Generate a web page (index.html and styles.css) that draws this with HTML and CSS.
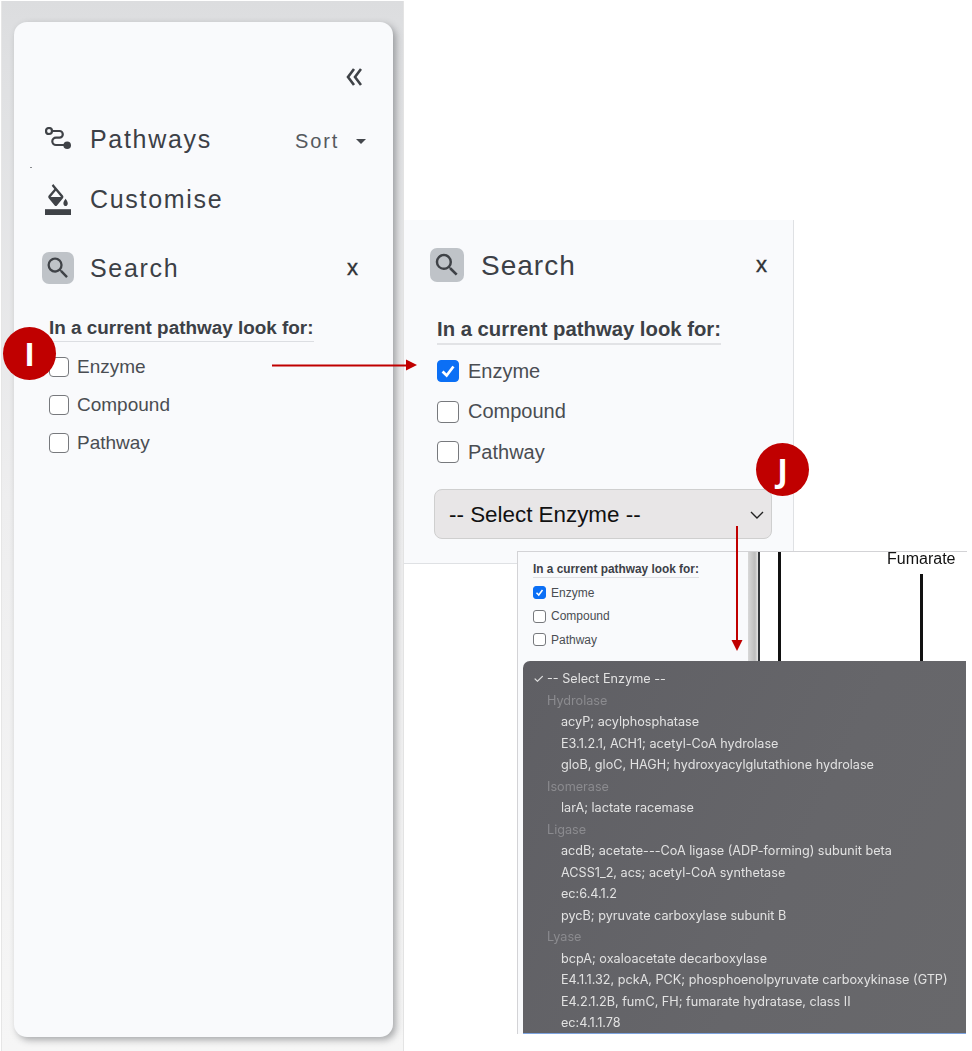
FILE: index.html
```html
<!DOCTYPE html>
<html lang="en">
<head>
<meta charset="utf-8">
<title>Search panel walkthrough</title>
<link rel="stylesheet" href="styles.css">
</head>
<body>
<main class="canvas">
  <section class="backdrop">
    <div class="card">
      <div class="collapse-row">
        <svg class="collapse-icon" viewBox="0 0 16 18"><path d="M8 1 L2 9 L8 17 M15 1 L9 9 L15 17"/></svg>
      </div>
      <div class="nav-row nav-row-pathways">
        <svg class="nav-icon" viewBox="0 0 26 24"><circle cx="4" cy="4" r="3" class="hollow"/><path class="hollow" d="M7 4H14.5a3.3 3.3 0 0 1 0 6.6H11a3.7 3.7 0 0 0 0 7.4H19"/><circle cx="22.2" cy="18.2" r="3.8" class="solid"/></svg>
        <span class="nav-label">Pathways</span>
        <span class="sort">Sort<i class="caret"></i></span>
      </div>
      <i class="speck"></i>
      <div class="nav-row nav-row-customise">
        <svg class="nav-icon nav-icon-fill" viewBox="0 0 24 24" preserveAspectRatio="none"><path class="solid" d="M16.56 8.94L7.62 0 6.21 1.41l2.38 2.38-5.15 5.15c-.59.59-.59 1.54 0 2.12l5.5 5.5c.29.29.68.44 1.06.44s.77-.15 1.06-.44l5.5-5.5c.59-.58.59-1.53 0-2.12zM5.21 10L10 5.21 14.79 10H5.21zM19 11.5s-2 2.17-2 3.5c0 1.1.9 2 2 2s2-.9 2-2c0-1.33-2-3.5-2-3.5z"/><path class="solid" d="M0 19.5h24V24H0z"/></svg>
        <span class="nav-label">Customise</span>
      </div>
      <div class="search-head">
        <span class="search-tile"><svg viewBox="0 0 24 24"><path class="solid" d="M15.5 14h-.79l-.28-.27A6.47 6.47 0 0 0 16 9.5 6.5 6.5 0 1 0 9.5 16c1.61 0 3.09-.59 4.23-1.57l.27.28v.79l5 4.99L20.49 19l-4.99-5zm-6 0C7.01 14 5 11.99 5 9.5S7.01 5 9.5 5 14 7.01 14 9.5 11.99 14 9.5 14z"/></svg></span>
        <span class="nav-label">Search</span>
        <span class="close">x</span>
      </div>
      <div class="finder">
        <h2 class="finder-title">In a current pathway look for:</h2>
        <label class="check"><i class="box"></i>Enzyme</label>
        <label class="check"><i class="box"></i>Compound</label>
        <label class="check"><i class="box"></i>Pathway</label>
      </div>
    </div>
  </section>

  <section class="zoom-panel">
    <div class="search-head">
      <span class="search-tile"><svg viewBox="0 0 24 24"><path class="solid" d="M15.5 14h-.79l-.28-.27A6.47 6.47 0 0 0 16 9.5 6.5 6.5 0 1 0 9.5 16c1.61 0 3.09-.59 4.23-1.57l.27.28v.79l5 4.99L20.49 19l-4.99-5zm-6 0C7.01 14 5 11.99 5 9.5S7.01 5 9.5 5 14 7.01 14 9.5 11.99 14 9.5 14z"/></svg></span>
      <span class="nav-label">Search</span>
      <span class="close">x</span>
    </div>
    <div class="finder">
      <h2 class="finder-title">In a current pathway look for:</h2>
      <label class="check"><i class="box box-on"><svg viewBox="0 0 22 22"><path d="M5 11.5 L9.5 16 L17 6"/></svg></i>Enzyme</label>
      <label class="check"><i class="box"></i>Compound</label>
      <label class="check"><i class="box"></i>Pathway</label>
    </div>
    <div class="select">
      <span>-- Select Enzyme --</span>
      <svg viewBox="0 0 14 8"><path d="M1 1 L7 7 L13 1"/></svg>
    </div>
  </section>

  <section class="shot">
    <div class="shot-side">
      <div class="finder">
        <h2 class="finder-title">In a current pathway look for:</h2>
        <label class="check"><i class="box box-on"><svg viewBox="0 0 22 22"><path d="M5 11.5 L9.5 16 L17 6"/></svg></i>Enzyme</label>
        <label class="check"><i class="box"></i>Compound</label>
        <label class="check"><i class="box"></i>Pathway</label>
      </div>
    </div>
    <div class="shot-map">
      <i class="map-edge"></i>
      <i class="map-line map-line-thin"></i>
      <i class="map-line map-line-thick"></i>
      <span class="map-fumarate">Fumarate</span>
      <i class="map-line map-line-fumarate"></i>
    </div>
  </section>

  <ul class="menu">
    <li class="opt opt-top"><span class="tick">✓</span>-- Select Enzyme --</li>
    <li class="group">Hydrolase</li>
    <li class="opt">acyP; acylphosphatase</li>
    <li class="opt">E3.1.2.1, ACH1; acetyl-CoA hydrolase</li>
    <li class="opt">gloB, gloC, HAGH; hydroxyacylglutathione hydrolase</li>
    <li class="group">Isomerase</li>
    <li class="opt">larA; lactate racemase</li>
    <li class="group">Ligase</li>
    <li class="opt">acdB; acetate---CoA ligase (ADP-forming) subunit beta</li>
    <li class="opt">ACSS1_2, acs; acetyl-CoA synthetase</li>
    <li class="opt">ec:6.4.1.2</li>
    <li class="opt">pycB; pyruvate carboxylase subunit B</li>
    <li class="group">Lyase</li>
    <li class="opt">bcpA; oxaloacetate decarboxylase</li>
    <li class="opt">E4.1.1.32, pckA, PCK; phosphoenolpyruvate carboxykinase (GTP)</li>
    <li class="opt">E4.2.1.2B, fumC, FH; fumarate hydratase, class II</li>
    <li class="opt">ec:4.1.1.78</li>
  </ul>

  <svg class="arrow arrow-right" viewBox="0 0 146 12"><path d="M0 6.5 H136" class="arrow-shaft"/><path d="M134 0.5 L145 6 L134 11.5 Z" class="arrow-head"/></svg>
  <svg class="arrow arrow-down" viewBox="0 0 12 126"><path d="M6 0 V116" class="arrow-shaft"/><path d="M0.5 114 L6 125 L11.5 114 Z" class="arrow-head"/></svg>
  <span class="badge badge-i">I</span>
  <span class="badge badge-j">J</span>
</main>
</body>
</html>
```
FILE: styles.css
```css
* { box-sizing: border-box; }
html, body { margin: 0; padding: 0; background: #fff; }
body { font-family: "Liberation Sans", Arial, sans-serif; color: #3c4046; }
.canvas { position: relative; width: 972px; height: 1051px; overflow: hidden; background: #fff; }

.hollow { fill: none; stroke: #3f4247; stroke-width: 2.2; }
.solid { fill: #3f4247; }

/* Left: application sidebar */
.backdrop {
  position: absolute; left: 1px; top: 1px; width: 403px; height: 1050px;
  padding: 21px 10px 14px 12px;
  background: linear-gradient(#dcdddf 0, #dfe0e2 60px, #eeeeef 500px, #f6f6f6 1050px);
  border-right: 1px solid #e4e4e4;
  border-left: 1px solid #e6e6e6;
}
.card {
  position: relative;
  height: 1015px; padding: 0 26px 0 28px;
  background: #f9fafc; border-radius: 13px;
  box-shadow: 3px 3px 7px rgba(60, 62, 66, .42);
  display: flex; flex-direction: column;
}
.speck { position: absolute; left: 16px; top: 145px; width: 2px; height: 1px; background: #8a8c90; }
.collapse-row { display: flex; justify-content: flex-end; padding-top: 46px; height: 104px; padding-right: 5px; }
.collapse-icon { width: 16px; height: 18px; fill: none; stroke: #3f4247; stroke-width: 2.6; }
.nav-row { display: flex; align-items: center; }
.nav-row-pathways { height: 26px; margin-left: 3px; }
.nav-row-customise { margin-top: 31px; height: 32px; margin-left: 3px; }
.nav-icon { width: 26px; height: 24px; flex: none; }
.nav-icon-fill { height: 31px; }
.nav-label { font-size: 25px; letter-spacing: 1.7px; color: #3c4046; margin-left: 19px; line-height: 28px; }
.sort { margin-left: auto; margin-top: 5px; font-size: 20px; letter-spacing: 1.8px; color: #55595e; display: flex; align-items: center; }
.caret { width: 0; height: 0; margin-left: 17px; margin-right: 1px; border: 5px solid transparent; border-top: 5px solid #44474c; border-bottom: 0; }
.search-head { display: flex; align-items: center; margin-top: 37px; height: 32px; }
.search-tile { width: 32px; height: 32px; flex: none; background: #bfc3c8; border-radius: 7px; display: flex; align-items: center; justify-content: center; }
.search-tile svg { width: 28px; height: 28px; }
.search-head .nav-label { margin-left: 16px; }
.close { margin-left: auto; margin-right: 9px; font-size: 22px; font-weight: 500; color: #2f3236; -webkit-text-stroke: .4px #2f3236; }
.finder { display: flex; flex-direction: column; align-items: flex-start; margin: 33px 0 0 7px; }
.finder-title { margin: 0 0 6px; padding-bottom: 2px; font-size: 18.9px; line-height: 22px; font-weight: 700; color: #3c4046; border-bottom: 1px solid #dcdee2; white-space: nowrap; }
.check { display: flex; align-items: center; height: 38px; font-size: 19px; color: #4a4d52; }
.box { width: 20px; height: 20px; margin-right: 8px; flex: none; background: #fff; border: 1.5px solid #77797d; border-radius: 4px; }

/* Middle: enlarged search panel */
.zoom-panel {
  position: absolute; left: 404px; top: 220px; width: 390px; height: 344px;
  padding: 28px 0 0 26px;
  background: #f9fafc;
  border-right: 1px solid #dfe1e4; border-bottom: 1px solid #dfe1e4;
}
.zoom-panel .search-head { margin-top: 0; height: 34px; width: 344px; }
.zoom-panel .search-tile { width: 34px; height: 34px; }
.zoom-panel .search-tile svg { width: 30px; height: 30px; }
.zoom-panel .nav-label { font-size: 28px; margin-left: 17px; margin-top: 1px; letter-spacing: 1px; }
.zoom-panel .close { margin-right: 7px; }
.zoom-panel .finder { margin: 35px 0 0 7px; }
.zoom-panel .finder-title { font-size: 20.3px; line-height: 24px; margin-bottom: 6px; border-bottom: 2px solid #e2e3e6; }
.zoom-panel .check { height: 40.5px; font-size: 20px; }
.zoom-panel .box { width: 22px; height: 22px; margin-right: 9px; }
.box-on { background: #0b6ff5; border-color: #0b6ff5; display: flex; padding: 0; }
.box-on svg { width: 100%; height: 100%; fill: none; stroke: #fff; stroke-width: 3; }
.select {
  display: flex; align-items: center; justify-content: space-between;
  width: 338px; height: 50px; margin: 16px 0 0 4px; padding: 2px 7px 0 14px;
  background: #e8e6e7; border: 1px solid #cfcfcf; border-radius: 8px;
  font-size: 22.4px; color: #111;
}
.select svg { width: 14px; height: 8px; fill: none; stroke: #222; stroke-width: 1.4; }

/* Lower right: application screenshot */
.shot {
  position: absolute; left: 517px; top: 551px; width: 450px; height: 483px;
  display: flex; background: #fff;
  border: 1px solid #d3d3d6; border-bottom: 0; border-right-width: 0;
  filter: blur(.3px);
}
.shot-side { width: 231px; background: #f9fafc; padding: 0 0 0 15px; }
.shot .finder { margin: 10px 0 0 0; }
.shot .finder-title { font-size: 11.85px; line-height: 14px; margin-bottom: 3px; padding-bottom: 1px; border-bottom: 1px solid #dfe0e3; }
.shot .check { height: 23.5px; font-size: 12px; }
.shot .box { width: 13px; height: 13px; margin-right: 5px; border-width: 1px; border-radius: 3px; }
.shot-map { position: relative; flex: 1; }
.map-edge { position: absolute; left: -1px; top: 0; width: 10px; height: 110px; background: linear-gradient(90deg, #d8d8d8, #bdbdbd 70%, #e6e6e6); }
.map-line { position: absolute; top: 0; height: 110px; background: #111; }
.map-line-thin { left: 9px; width: 2px; background: #33363a; }
.map-line-thick { left: 29px; width: 3px; }
.map-line-fumarate { left: 171px; top: 22px; height: 90px; width: 3px; }
.map-fumarate { position: absolute; left: 138px; top: -3px; font-size: 16px; line-height: 20px; color: #111; }

.menu {
  position: absolute; left: 523px; top: 661px; width: 443px; height: 373px;
  margin: 0; padding: 7px 0 0 0; list-style: none; overflow: hidden;
  background: linear-gradient(115deg, #5f5f64, #66666a 60%, #68686b);
  border-radius: 7px 0 0 0;
  border-bottom: 1px solid #7da4e0;
  font-family: Inter, "Liberation Sans", sans-serif;
  font-size: 12.65px; line-height: 21.5px; color: #e2e2e2;
  filter: blur(.3px);
}
.menu li { height: 21.5px; white-space: nowrap; }
.opt { padding-left: 38px; }
.opt-top { padding-left: 10px; display: flex; }
.tick { width: 14px; flex: none; }
.group { padding-left: 24px; color: #8b8b8f; }

/* Annotations */
.arrow { position: absolute; }
.arrow-right { left: 272px; top: 359px; width: 146px; height: 12px; }
.arrow-down { left: 731px; top: 526px; width: 12px; height: 126px; }
.arrow-shaft { stroke: #c00000; stroke-width: 2; fill: none; }
.arrow-head { fill: #c00000; }
.badge {
  position: absolute; width: 53px; height: 53px; border-radius: 50%;
  background: #c00000; color: #fff;
  display: flex; align-items: center; justify-content: center;
  font-family: "Open Sans", sans-serif; font-weight: 700; font-size: 32px; line-height: 1;
}
.badge-i { left: 3px; top: 327px; }
.badge-j { left: 756px; top: 443px; }
```
